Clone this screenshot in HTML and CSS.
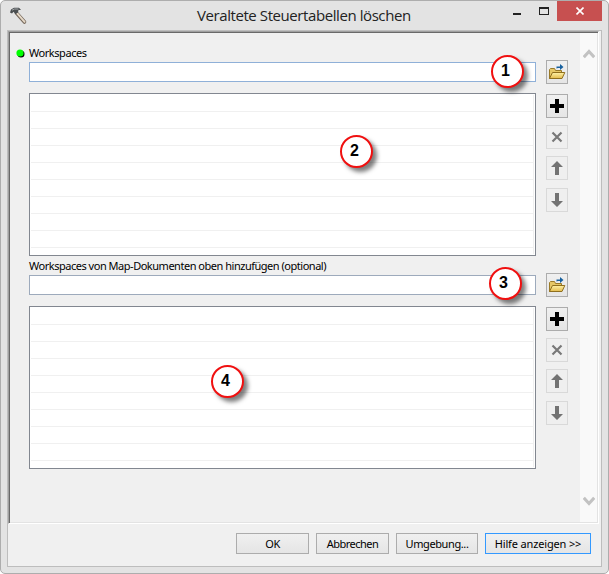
FILE: index.html
```html
<!DOCTYPE html>
<html lang="de">
<head>
<meta charset="utf-8">
<title>Veraltete Steuertabellen löschen</title>
<link rel="stylesheet" href="styles.css">
</head>
<body>
<svg class="defs" width="0" height="0" aria-hidden="true">
  <defs>
    <linearGradient id="gold" x1="0" y1="0" x2="0" y2="1"><stop offset="0" stop-color="#fff2a8"/><stop offset="1" stop-color="#e3bb4c"/></linearGradient>
    <symbol id="folder" viewBox="0 0 18 18">
      <path d="M1.500 15.500V6.500l1-1h4l1 2h6v8z" fill="#e6c766" stroke="#9a7a28"/>
      <path d="M1.500 15.500L4.500 9.500h12.300L14 15.500z" fill="url(#gold)" stroke="#8f6f1e"/>
      <path d="M8.500 5.500V3.500H12V1l3.500 3L12 7V5H10" fill="#17609e"/>
    </symbol>
    <symbol id="plus" viewBox="0 0 14 14"><path d="M5 0h4v5h5v4H9v5H5V9H0V5h5z" fill="#000"/></symbol>
    <symbol id="cross" viewBox="0 0 12 12"><path d="M1.500 1.500l9 9M10.500 1.500l-9 9" fill="none" stroke="#787878" stroke-width="2.200"/></symbol>
    <symbol id="up" viewBox="0 0 12 14"><path d="M6 0l6 6H8v8H4V6H0z" fill="#737373"/></symbol>
    <symbol id="down" viewBox="0 0 12 14"><path d="M6 14l6-6H8V0H4v8H0z" fill="#737373"/></symbol>
  </defs>
</svg>
<div class="window">
  <header class="titlebar">
    <svg class="hammer" width="18" height="18" viewBox="0 0 18 18">
      <path d="M6.500 6l8 9" stroke="#74675a" stroke-width="3.600" stroke-linecap="round"/>
      <path d="M6.800 5.800l7.800 9" stroke="#e6d9c8" stroke-width="1.900" stroke-linecap="round"/>
      <path d="M0 5.500L1 2.500l3-1.800 5 .1L11 3H8.500L8 5.500 5.500 7.200 3.500 4.800 2 6.500z" fill="#4a4e50"/>
      <path d="M2 3.200L4.500 2h4" fill="none" stroke="#a3a7a9"/>
    </svg>
    <h1 class="title">Veraltete Steuertabellen löschen</h1>
    <div class="controls">
      <svg width="60" height="20" viewBox="0 0 60 20"><path d="M16 12h8v2h-8z" fill="#222"/><path d="M42 6h10v8H42zM43 8v5h8V8z" fill="#222" fill-rule="evenodd"/></svg>
      <div class="close"><svg width="8" height="8" viewBox="0 0 8 8"><path d="M.5.5l7 7M7.500.5l-7 7" stroke="#fff" stroke-width="1.600"/></svg></div>
    </div>
  </header>
  <main class="client">
    <div class="panel">
      <div class="form">
        <section class="param first">
          <div class="label"><svg class="dot" width="9" height="9" viewBox="0 0 9 9"><circle cx="5" cy="5" r="3.500" fill="#000"/><circle cx="4" cy="4" r="3.600" fill="#0f0"/></svg><span class="label-text short">Workspaces</span></div>
          <div class="row">
            <div class="fields"><div class="input active"><span class="marker m1">1</span></div><div class="list"><div class="lines"></div><span class="marker m2">2</span></div></div>
            <div class="tools">
              <div class="tool browse"><svg width="18" height="18"><use href="#folder"/></svg></div>
              <div class="tool add"><svg width="14" height="14"><use href="#plus"/></svg></div>
              <div class="tool off"><svg width="12" height="12"><use href="#cross"/></svg></div>
              <div class="tool off"><svg width="12" height="14"><use href="#up"/></svg></div>
              <div class="tool off last"><svg width="12" height="14"><use href="#down"/></svg></div>
            </div>
          </div>
        </section>
        <section class="param">
          <div class="label"><span class="label-text long">Workspaces von Map-Dokumenten oben hinzufügen (optional)</span></div>
          <div class="row">
            <div class="fields"><div class="input"><span class="marker m3">3</span></div><div class="list"><div class="lines"></div><span class="marker m4">4</span></div></div>
            <div class="tools">
              <div class="tool browse"><svg width="18" height="18"><use href="#folder"/></svg></div>
              <div class="tool add"><svg width="14" height="14"><use href="#plus"/></svg></div>
              <div class="tool off"><svg width="12" height="12"><use href="#cross"/></svg></div>
              <div class="tool off"><svg width="12" height="14"><use href="#up"/></svg></div>
              <div class="tool off last"><svg width="12" height="14"><use href="#down"/></svg></div>
            </div>
          </div>
        </section>
      </div>
      <div class="scrollbar">
        <svg width="12" height="10" viewBox="0 0 12 10"><path d="M.8 8.200L6 2.500l5.200 5.700" fill="none" stroke="#c2c2c2" stroke-width="3"/></svg>
        <svg width="12" height="10" viewBox="0 0 12 10"><path d="M.8 1.800L6 7.500l5.200-5.700" fill="none" stroke="#c2c2c2" stroke-width="3"/></svg>
      </div>
    </div>
    <footer class="actions">
      <div class="button ok">OK</div>
      <div class="button cancel">Abbrechen</div>
      <div class="button env">Umgebung...</div>
      <div class="button help">Hilfe anzeigen &gt;&gt;</div>
    </footer>
  </main>
</div>
</body>
</html>
```
FILE: styles.css
```css
* { box-sizing: border-box; }
body { margin: 0; background: #fff; overflow: hidden; font: 11px/14px "Noto Sans", sans-serif; color: #000; }
svg { display: block; flex: none; }
.defs { position: absolute; }
.window { width: 609px; height: 574px; border: 1px solid #adadad; border-radius: 5px; background: #e3e3e3; padding: 0 6px 6px; overflow: hidden; }
.titlebar { height: 29px; display: flex; align-items: flex-start; }
.hammer { margin: 6px 0 0 3px; }
.title { margin: 3px 0 0 169px; width: 240px; font: 400 15px/22px "Open Sans", sans-serif; letter-spacing: -0.42px; color: #222; white-space: nowrap; }
.controls { display: flex; margin-left: 60px; }
.close { width: 45px; height: 20px; background: #c75050; display: flex; align-items: center; justify-content: center; }
.client { height: 537px; border: 1px solid #bdbdbd; background: #f0f0f0; }
.panel { width: 591px; height: 493px; display: flex; border: 1px solid; border-color: #a0a0a0 #fff #fff #a0a0a0; box-shadow: inset 1px 1px #696969, inset -1px -1px #e3e3e3; padding: 1px; }
.form { width: 570px; padding-left: 6px; }
.param { padding-top: 3px; }
.param.first { padding-top: 13px; }
.label { height: 16px; padding-left: 13px; display: flex; position: relative; }
.dot { position: absolute; left: 0; top: 3px; }
.label-text { white-space: nowrap; }
.short { letter-spacing: -0.45px; }
.long { letter-spacing: -0.48px; }
.row { display: flex; gap: 10px; padding-left: 13px; height: 194px; }
.fields { width: 507px; }
.input { height: 20px; background: #fff; border: 1px solid #9daabc; position: relative; }
.input.active { border-color: #8fb0d8; }
.list { height: 163px; margin-top: 11px; background: #fff; border: 1px solid #828790; position: relative; padding: 1px; }
.lines { width: 503px; height: 159px; border-right: 1px solid #f0f0f0; background: repeating-linear-gradient(to bottom, #fff 0 16px, #f0f0f0 16px 17px); }
.tools { display: flex; flex-direction: column; width: 22px; margin-top: -2px; }
.tool { width: 22px; height: 24px; flex: none; display: flex; align-items: center; justify-content: center; border: 1px solid #acacac; background: linear-gradient(#f0f0f0, #e5e5e5); margin-bottom: 7px; }
.tool.browse { margin-bottom: 10px; }
.tool.off { background: #efefef; border-color: #d9d9d9; }
.tool.last { margin-top: 1px; }
.scrollbar { width: 17px; background: #f9f9f9; display: flex; flex-direction: column; justify-content: space-between; align-items: center; padding: 16px 0; }
.marker { position: absolute; width: 33px; height: 33px; border: 2px solid #f01010; border-radius: 50%; background: #fff; box-shadow: 4px 4px 4px rgba(0, 0, 0, .5); font: 700 16px/27px "Liberation Sans", sans-serif; padding-right: 4px; text-align: center; z-index: 1; }
.m1 { left: 461px; top: -8px; }
.m2 { left: 310px; top: 41px; }
.m3 { left: 459px; top: -9px; }
.m4 { left: 181px; top: 58px; }
.actions { display: flex; gap: 7px; padding: 9px 10px 0 0; justify-content: flex-end; }
.button { height: 21px; border: 1px solid #acacac; background: linear-gradient(#f0f0f0, #e5e5e5); line-height: 20px; text-align: center; white-space: nowrap; letter-spacing: -0.4px; }
.ok, .cancel { width: 73px; }
.cancel { letter-spacing: -0.5px; }
.env { width: 82px; }
.help { width: 106px; border-color: #3399ff; letter-spacing: -0.15px; }
```
